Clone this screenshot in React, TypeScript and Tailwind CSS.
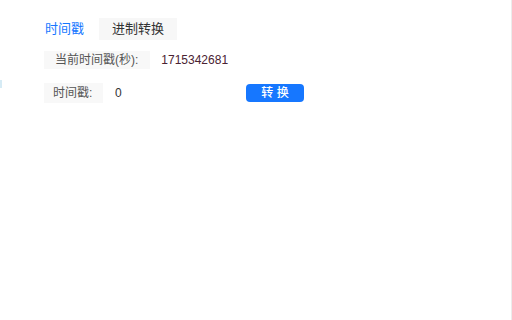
import React, { useState } from 'react';

const App: React.FC = () => {
  const [tab, setTab] = useState<'ts' | 'radix'>('ts');
  const [value, setValue] = useState('0');

  return (
    <div
      className="relative w-[512px] h-[320px] bg-white border-r border-[#ececec] overflow-hidden text-[12px] text-[#333]"
      style={{ fontFamily: '"Liberation Sans", "Noto Sans CJK SC", sans-serif' }}
    >
      {/* left edge marker */}
      <div className="absolute left-0 top-[80px] w-[2px] h-[8px] bg-[#d6ebf5]" />

      <div className="pt-[18px] pl-[32px]">
        {/* Tabs */}
        <div className="flex gap-[2px] text-[13px]">
          <button
            onClick={() => setTab('ts')}
            className={`h-[22px] px-[13px] leading-[22px] ${tab === 'ts' ? 'text-[#1677ff]' : 'text-[#333] bg-[#f7f7f7]'}`}
          >
            时间戳
          </button>
          <button
            onClick={() => setTab('radix')}
            className={`h-[22px] px-[13px] leading-[22px] ${tab === 'radix' ? 'text-[#1677ff]' : 'text-[#333] bg-[#f7f7f7]'}`}
          >
            进制转换
          </button>
        </div>
      </div>

      <div className="pl-[44px]">
        {/* Current timestamp */}
        <div className="mt-[11px] flex items-center">
          <div className="h-[18px] pl-[11px] pr-[12px] leading-[18px] bg-[#f8f8f8] text-[#555]">当前时间戳(秒):</div>
          <div className="ml-[11px] text-[#4a2232]">1715342681</div>
        </div>

        {/* Convert row */}
        <div className="mt-[14px] flex items-center">
          <div className="w-[59px] h-[20px] pl-[9px] leading-[20px] bg-[#f8f8f8] text-[#555]">时间戳:</div>
          <input
            value={value}
            onChange={e => setValue(e.target.value)}
            className="w-[143px] h-[20px] pl-[12px] outline-none bg-transparent text-[#333]"
          />
          <button className="w-[58px] h-[18px] rounded-[4px] bg-[#1677ff] text-white text-[12px] font-medium leading-[18px]">
            转 换
          </button>
        </div>
      </div>
    </div>
  );
};

export default App;
